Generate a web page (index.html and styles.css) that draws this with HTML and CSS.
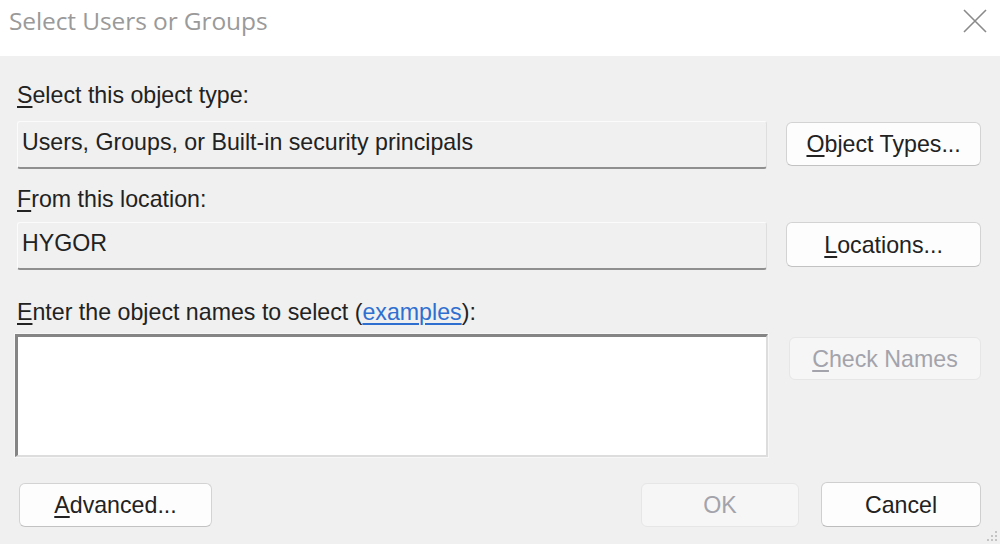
FILE: index.html
```html
<!DOCTYPE html>
<html lang="en">
<head>
<meta charset="utf-8">
<title>Select Users or Groups</title>
<link rel="stylesheet" href="styles.css">
</head>
<body>
<div class="dialog">
  <div class="titlebar">
    <span class="title">Select Users or Groups</span>
    <svg class="close" width="26" height="26" viewBox="0 0 26 26"><path d="M2 2 L24 24 M24 2 L2 24" stroke="#8a8a8a" stroke-width="1.6" fill="none"/></svg>
  </div>
  <div class="content">
    <div class="label first"><u>S</u>elect this object type:</div>
    <div class="row r1">
      <div class="field">Users, Groups, or Built-in security principals</div>
      <div class="btn side"><u>O</u>bject Types...</div>
    </div>
    <div class="label l2"><u>F</u>rom this location:</div>
    <div class="row r2">
      <div class="field">HYGOR</div>
      <div class="btn side loc"><u>L</u>ocations...</div>
    </div>
    <div class="label l3"><u>E</u>nter the object names to select (<span class="link">examples</span>):</div>
    <div class="row r3">
      <div class="names"></div>
      <div class="btn side disabled check"><u>C</u>heck Names</div>
    </div>
    <div class="bottom">
      <div class="btn adv"><u>A</u>dvanced...</div>
      <div class="spacer"></div>
      <div class="btn disabled ok">OK</div>
      <div class="btn cancel">Cancel</div>
    </div>
  </div>
  <svg class="grip" width="16" height="16" viewBox="0 0 16 16">
    <g fill="#c4c4c4">
      <rect x="12" y="3" width="2" height="2"/>
      <rect x="8" y="7" width="2" height="2"/><rect x="12" y="7" width="2" height="2"/>
      <rect x="4" y="11" width="2" height="2"/><rect x="8" y="11" width="2" height="2"/><rect x="12" y="11" width="2" height="2"/>
    </g>
  </svg>
</div>
</body>
</html>
```
FILE: styles.css
```css
html, body {
  margin: 0;
  padding: 0;
}
body {
  width: 1000px;
  height: 544px;
  overflow: hidden;
  background: #f0f0f0;
  font-family: "Liberation Sans", Arial, sans-serif;
  color: #222222;
}
.dialog {
  position: relative;
  width: 1000px;
  height: 544px;
  background: #f0f0f0;
}
.titlebar {
  height: 56px;
  background: #ffffff;
  display: flex;
  justify-content: space-between;
  align-items: flex-start;
  box-sizing: border-box;
  padding: 4px 12px 0 9px;
}
.title {
  font-family: "Open Sans", "Noto Sans", sans-serif;
  font-size: 24.5px;
  line-height: 34px;
  color: #9a9a9a;
  letter-spacing: -0.1px;
}
.close {
  margin-top: 4px;
}
.content {
  padding: 0 19px 0 17px;
  font-size: 23.2px;
}
.label {
  line-height: 26px;
  height: 26px;
  white-space: nowrap;
}
.label.first { margin-top: 26px; }
.label.l2 { margin-top: 17px; }
.label.l3 { margin-top: 29px; }
u {
  text-decoration-thickness: 2px;
  text-underline-offset: 3px;
}
.link {
  color: #2f6fd0;
  text-decoration: underline;
  text-decoration-thickness: 1.5px;
  text-underline-offset: 3px;
}
.row {
  display: flex;
  align-items: flex-start;
  gap: 19px;
}
.r1 { margin-top: 13px; }
.r2 { margin-top: 10px; }
.r3 { margin-top: 9px; }
.field {
  width: 751px;
  height: 48px;
  box-sizing: border-box;
  background: #f0f0f0;
  border-top: 1px solid #fbfbfb;
  border-left: 1px solid #fbfbfb;
  border-right: 1px solid #dedede;
  border-bottom: 2px solid #8f8f8f;
  border-radius: 3px;
  padding: 7px 0 0 4px;
  line-height: 26px;
  white-space: nowrap;
}
.btn {
  box-sizing: border-box;
  height: 44px;
  background: #fdfdfd;
  border: 1px solid #d3d3d3;
  border-bottom-color: #c2c2c2;
  border-radius: 6px;
  display: flex;
  align-items: center;
  justify-content: center;
  line-height: 26px;
  white-space: nowrap;
}
.btn.side {
  width: 195px;
  margin-top: 1px;
}
.btn.loc {
  margin-top: 0;
  height: 45px;
}
.btn.disabled {
  background: #f6f6f6;
  border-color: #e6e6e6;
  color: #a3a3ab;
}
.btn.check {
  margin-top: 3px;
  height: 43px;
  width: 192px;
  margin-left: 2px;
}
.names {
  width: 753px;
  height: 123px;
  margin-left: -2px;
  box-sizing: border-box;
  background: #ffffff;
  border-top: 3px solid #858585;
  border-left: 3px solid #858585;
  border-right: 2px solid #dddddd;
  border-bottom: 2px solid #dddddd;
  box-shadow: 0 0 0 1px #f7f7f7;
}
.bottom {
  display: flex;
  align-items: flex-start;
  margin-top: 26px;
}
.btn.adv {
  width: 193px;
  margin-left: 2px;
}
.spacer {
  flex: 1;
}
.btn.ok {
  width: 158px;
}
.btn.cancel {
  width: 160px;
  margin-left: 22px;
  height: 45px;
  margin-top: -1px;
  border-color: #cfcfcf;
  border-bottom-color: #bdbdbd;
}
.grip {
  position: absolute;
  right: 1px;
  bottom: 0;
}
```
